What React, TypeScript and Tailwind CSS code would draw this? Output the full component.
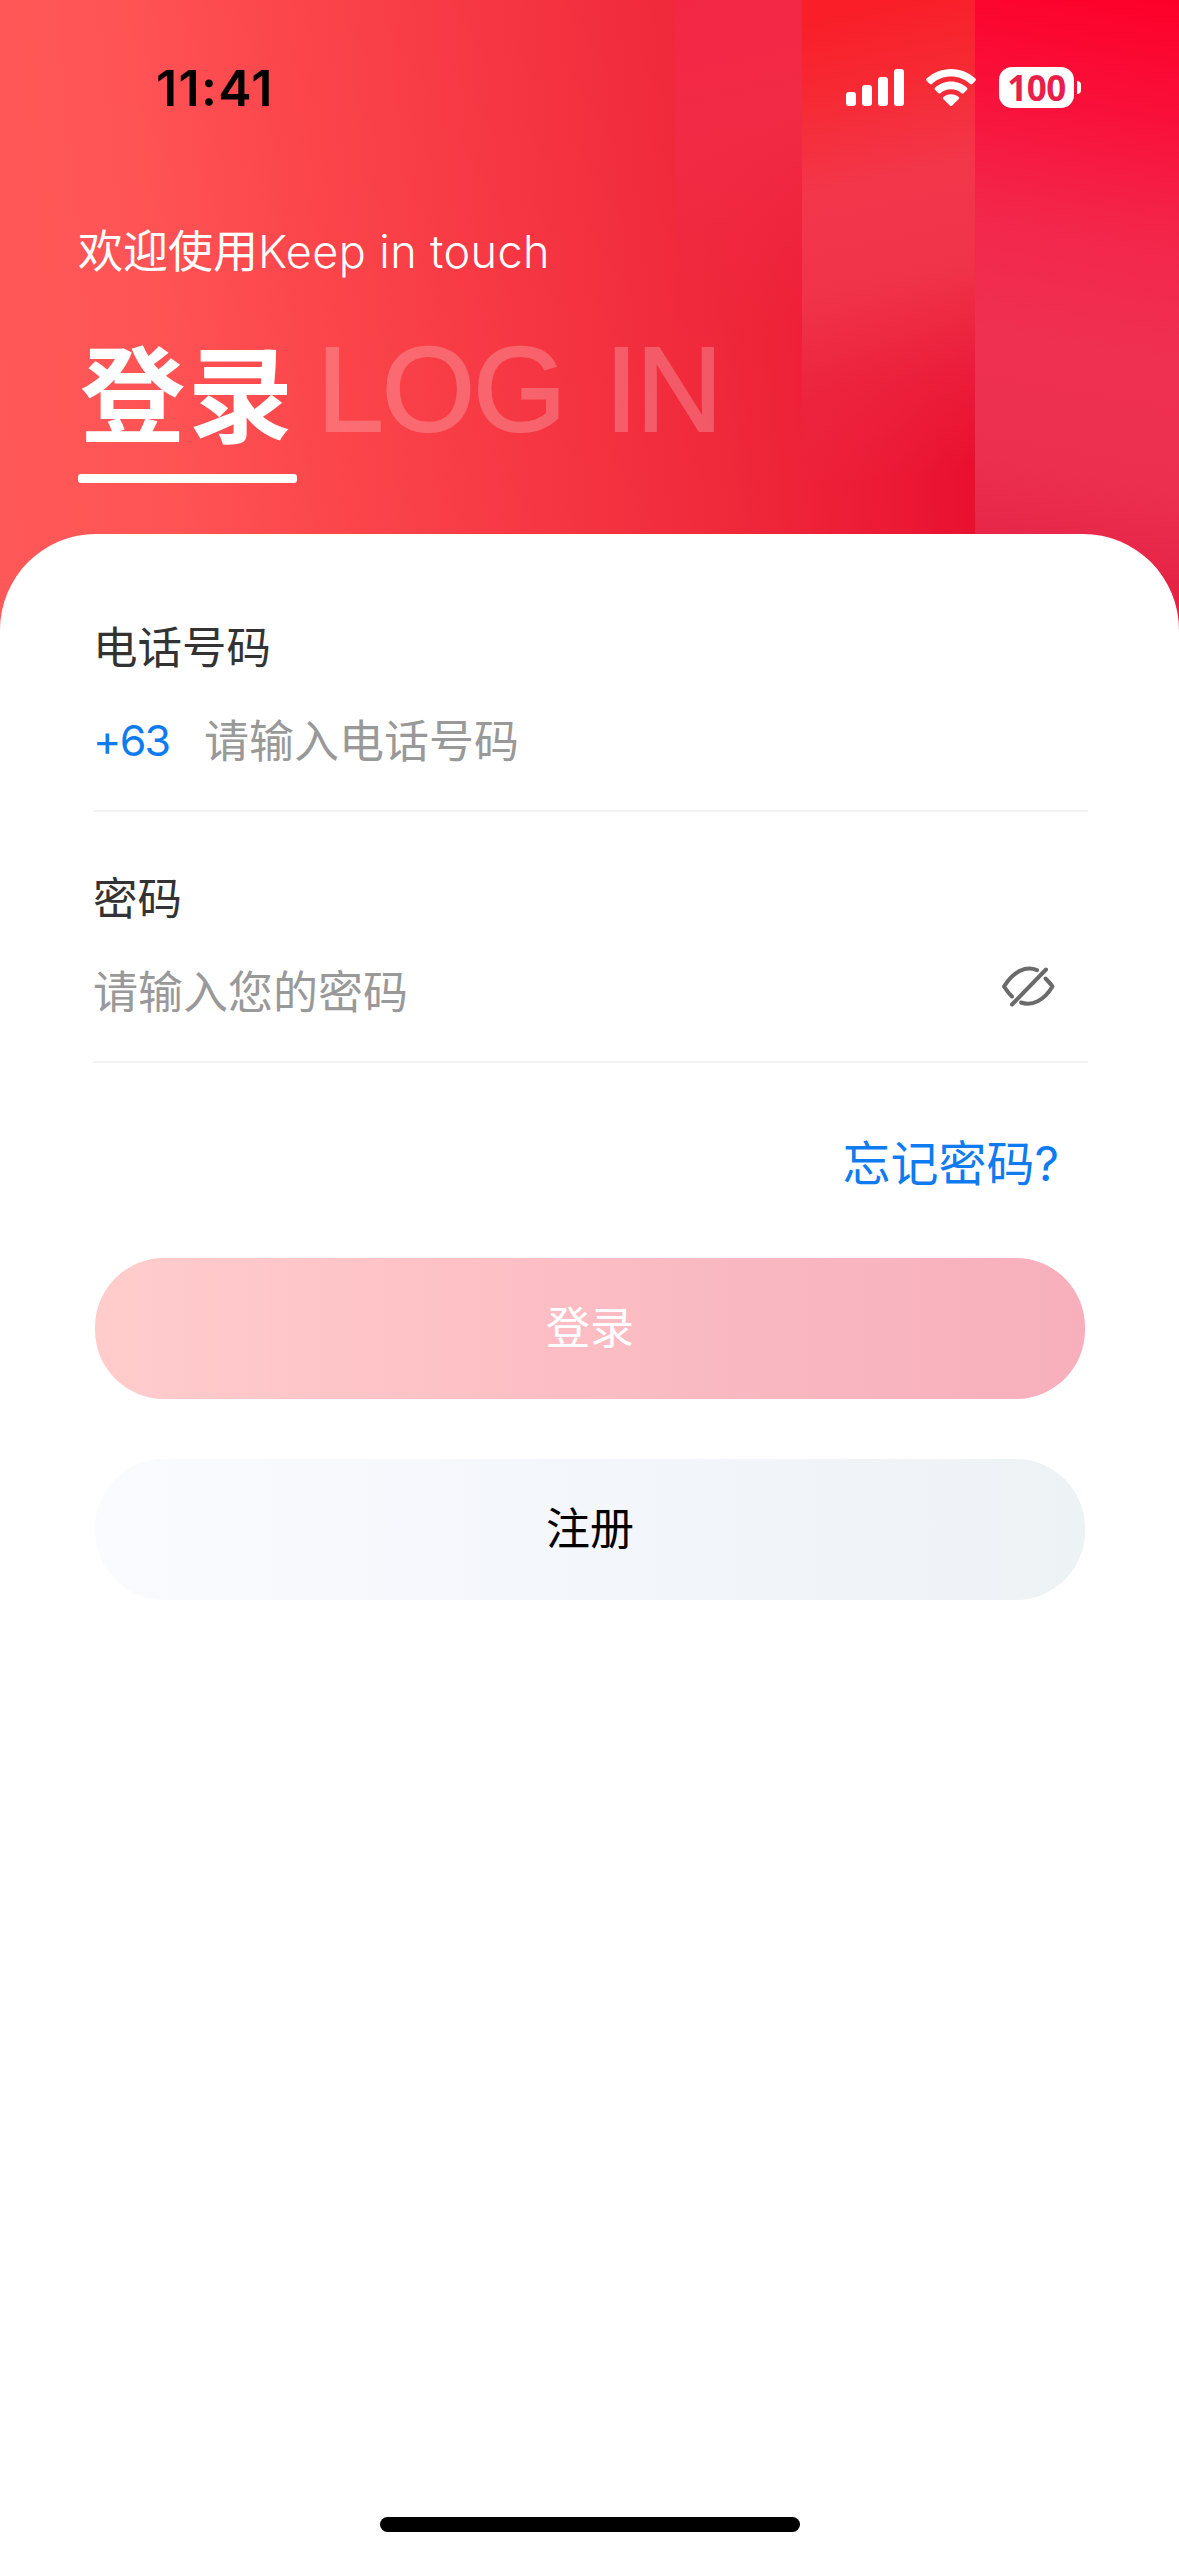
import { useState } from "react";

const fields = [
  { id: "phone", label: "电话号码", prefix: "+63", placeholder: "请输入电话号码", secret: false },
  { id: "password", label: "密码", prefix: "", placeholder: "请输入您的密码", secret: true },
];

function SignalIcon() {
  return (
    <svg width="58" height="37" viewBox="0 0 58 37" fill="white">
      <rect x="0" y="23" width="10" height="14" rx="3" />
      <rect x="16" y="16" width="10" height="21" rx="3" />
      <rect x="32" y="8" width="10" height="29" rx="3" />
      <rect x="48" y="0" width="10" height="37" rx="3" />
    </svg>
  );
}

function WifiIcon() {
  return (
    <svg width="50" height="37" viewBox="0 0 50 37" fill="white">
      <path d="M25 0C34.6 0 43 3.700 49.400 9.600Q50.400 10.700 49.400 11.700L46.200 14.900Q45.200 15.800 44.100 14.900C39 10.300 32.300 7.600 25 7.600S11 10.300 5.900 14.900Q4.800 15.800 3.800 14.900L0.600 11.700Q-0.400 10.700 0.600 9.600C7 3.700 15.400 0 25 0Z" />
      <path d="M25 12.600C31.200 12.600 36.800 15 41 18.800Q42 19.800 41 20.800L37.600 24.200Q36.600 25 35.600 24.200C32.800 21.700 29.100 20.200 25 20.200S17.200 21.700 14.400 24.200Q13.400 25 12.400 24.200L9 20.800Q8 19.800 9 18.800C13.200 15 18.800 12.600 25 12.600Z" />
      <path d="M25 25.200C28 25.200 30.700 26.300 32.700 28Q33.700 29 32.700 30.100L26.200 36.500Q25 37.500 23.800 36.500L17.300 30.100Q16.300 29 17.300 28C19.300 26.300 22 25.200 25 25.200Z" />
    </svg>
  );
}

function EyeOffIcon() {
  return (
    <svg width="54" height="42" viewBox="0 0 54 42" fill="none" stroke="#6b6b6b" strokeWidth="4" strokeLinecap="round" strokeLinejoin="round">
      <path d="M36 4.200C25 -0.500 13 5 3 20.500C5.500 24.500 8.200 27.800 11 30.500" />
      <path d="M44.500 12.500C47 15 49.500 17.500 51.500 20.500C43 34.500 31 40.500 20 36.500" />
      <path d="M45 3.500L11 38.500" />
    </svg>
  );
}

function StatusBar() {
  return (
    <div className="flex h-[176px] items-start justify-between pl-[156px] pr-[98px] pt-[67px]">
      <span className="font-['Inter'] text-[50px] font-semibold leading-[42px] tracking-[1.300px] text-black">11:41</span>
      <div className="flex h-[41px] items-center">
        <SignalIcon />
        <div className="ml-[22px]">
          <WifiIcon />
        </div>
        <div className="ml-[23px] flex h-[41px] w-[75px] items-center justify-center rounded-[13px] bg-white font-['Open_Sans'] text-[35px] font-bold leading-none tracking-[-0.500px] text-[#ea1f49]">
          100
        </div>
        <div className="ml-[3px] h-[13px] w-[4px] rounded-r-full bg-white" />
      </div>
    </div>
  );
}

export default function App() {
  const [visible, setVisible] = useState(false);

  return (
    <div className="relative flex h-[2556px] w-[1179px] flex-col overflow-hidden bg-white font-['Liberation_Sans','Noto_Sans_CJK_SC',sans-serif]">
      {/* Header backdrop with vertical light bands */}
      <div className="absolute inset-x-0 top-0 flex h-[640px] justify-end bg-[linear-gradient(84deg,#ff5858_0%,#ff5455_14%,#fb464b_28%,#f63743_44%,#ef283a_60%,#ec1a35_72%,#e6072a_86%)]">
        <div className="h-[350px] w-[127px] bg-[linear-gradient(168deg,#f32646_0%,#f22a45_35%,#f0284199_65%,#ee203800_92%)]" />
        <div className="h-[480px] w-[173px] bg-[linear-gradient(168deg,#f91e28_4%,#f62a34_20%,#f3364a_38%,#f03349_58%,#ec2440aa_78%,#e9143000_97%)]" />
        <div className="h-full w-[204px] bg-[linear-gradient(190deg,#fd0029_0%,#f9103a_18%,#f3264a_36%,#ef3051_54%,#ec2f4f_72%,#e8284a_82%,#e2183d_96%)]" />
      </div>

      <header className="relative h-[534px] shrink-0 text-white">
        <StatusBar />
        <div className="pl-[78px]">
          <p className="mt-[44px] flex h-[66px] items-center whitespace-pre text-[45px] leading-[66px]">
            欢迎使用<span className="-mt-[2px] font-['Inter'] font-light tracking-[0.400px]">Keep in touch</span>
          </p>
          <div className="mt-[38px] flex items-start">
            <div className="h-[159px] w-[219px]">
              <h1 className="-mt-[4px] h-[154px] whitespace-nowrap pl-[2px] font-['Noto_Sans_CJK_SC'] text-[105px] font-bold leading-[136px] tracking-[3px]">
                登录
              </h1>
              <div className="h-[9px] w-[219px] rounded-[3px] bg-white" />
            </div>
            <span className="-mt-[2px] ml-[20px] text-[120px] leading-[134px] tracking-[-2px] text-white opacity-[0.22] [-webkit-text-stroke:2px_white] [word-spacing:9px]">
              LOG IN
            </span>
          </div>
        </div>
      </header>

      {/* Form sheet */}
      <main className="relative flex grow flex-col rounded-t-[96px] bg-white px-[93px] pt-[77px]">
        {fields.map((field) => (
          <div key={field.id} className="h-[251px]">
            <div className="-mr-[2px] h-[201px] border-b-2 border-[#f3f3f3]">
              <label htmlFor={field.id} className="block h-[74px] pt-[2px] text-[44.500px] leading-[72px] text-[#333333]">
                {field.label}
              </label>
              <div className="mt-[22px] flex h-[72px] items-center">
                {field.prefix && (
                  <span className="-mt-[5px] w-[111px] font-['Inter'] text-[43px] tracking-[-1.800px] text-[#0e7cf0]">
                    {field.prefix}
                  </span>
                )}
                <input
                  id={field.id}
                  type={field.secret && !visible ? "password" : "text"}
                  placeholder={field.placeholder}
                  className="h-[72px] grow bg-transparent text-[45px] text-[#333333] outline-none placeholder:text-[#999999]"
                />
                {field.secret && (
                  <button onClick={() => setVisible(!visible)} className="mb-[14px] mr-[33px]">
                    <EyeOffIcon />
                  </button>
                )}
              </div>
            </div>
          </div>
        ))}

        <a className="mr-[27px] mt-[15px] h-[72px] self-end text-[48px] leading-[72px] text-[#0e7cf0]">
          忘记密码<span className="font-['Inter']">?</span>
        </a>

        <div className="mt-[58px] flex flex-col gap-[60px] pl-[2px] pr-px">
          <button className="h-[141px] rounded-[69px] bg-[linear-gradient(90deg,#ffcccc_0%,#fdc0c5_40%,#f9b8c1_65%,#f7afbc_100%)] text-[44px] text-white">
            登录
          </button>
          <button className="h-[141px] rounded-[69px] bg-[linear-gradient(90deg,#fafbff_0%,#f3f6fa_50%,#edf2f5_100%)] text-[44px] text-black">
            注册
          </button>
        </div>
      </main>

      {/* Home indicator */}
      <div className="relative mb-[24px] h-[15px] w-[420px] shrink-0 self-center rounded-full bg-black" />
    </div>
  );
}
